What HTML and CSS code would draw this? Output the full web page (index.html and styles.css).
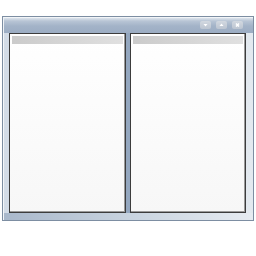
FILE: index.html
```html
<!DOCTYPE html>
<html>
<head>
<meta charset="utf-8">
<link rel="stylesheet" href="styles.css">
</head>
<body>
<div class="window">
  <div class="titlebar">
    <div class="buttons">
      <span class="btn"><svg width="11" height="8" viewBox="0 0 11 8"><path d="M3.5 3h4L5.5 5.5z" fill="#fff"/></svg></span>
      <span class="btn"><svg width="11" height="8" viewBox="0 0 11 8"><path d="M3.5 5h4L5.5 2.5z" fill="#fff"/></svg></span>
      <span class="btn"><svg width="11" height="8" viewBox="0 0 11 8"><path d="M4 2.5l3 3M7 2.5l-3 3" stroke="#fff" stroke-width="1.5"/></svg></span>
    </div>
  </div>
  <div class="content">
    <div class="pane"><div class="pane-head"></div></div>
    <div class="divider"></div>
    <div class="pane"><div class="pane-head"></div></div>
  </div>
</div>
</body>
</html>
```
FILE: styles.css
```css
html, body { margin: 0; padding: 0; background: #fff; }
body { width: 256px; height: 256px; font-family: "Liberation Sans", sans-serif; }
.window {
  margin: 16px 0 0 2px;
  width: 252px;
  height: 205px;
  box-sizing: border-box;
  border: 1px solid #7d8ea2;
  background: #dfe6ee;
  display: flex;
  flex-direction: column;
}
.titlebar {
  height: 16px;
  flex: none;
  background:
    linear-gradient(180deg, #dde4ec 0px, #b8c5d5 3px, #a3b3c8 8px, #9cadc3 100%);
  border-top: 1px solid #f2f5f8;
  border-left: 1px solid #eef2f6;
  display: flex;
  justify-content: flex-end;
  align-items: flex-start;
  padding: 3px 10px 0 0;
  box-sizing: border-box;
}
.buttons { display: flex; gap: 5px; }
.btn {
  width: 11px;
  height: 8px;
  border-radius: 2px;
  background: linear-gradient(180deg, #d2d8e0 0%, #bcc5d1 100%);
  display: block;
  line-height: 0;
}
.btn svg { display: block; }
.content {
  flex: 1;
  display: flex;
  padding: 0 7px 7px 5px;
  background:
    linear-gradient(90deg, #a9b8cb 0%, #c8d3df 50%, #e6ebf1 100%) bottom / 100% 7px no-repeat,
    linear-gradient(90deg, #d3dce7 0%, #e3e9ef 100%);
  border-left: 1px solid #f4f7fa;
}
.divider {
  width: 4px;
  background: #94a7bf;
}
.pane {
  width: 117px;
  box-sizing: border-box;
  border: 1px solid #3c3c3c;
  box-shadow: inset -1px -1px 0 #9a9a9a;
  background: linear-gradient(180deg, #ffffff 0%, #f7f7f7 100%);
  padding: 2px;
}
.pane-head {
  height: 8px;
  background: linear-gradient(90deg, #cbcbcb 0%, #e0e0e0 100%);
}
```
